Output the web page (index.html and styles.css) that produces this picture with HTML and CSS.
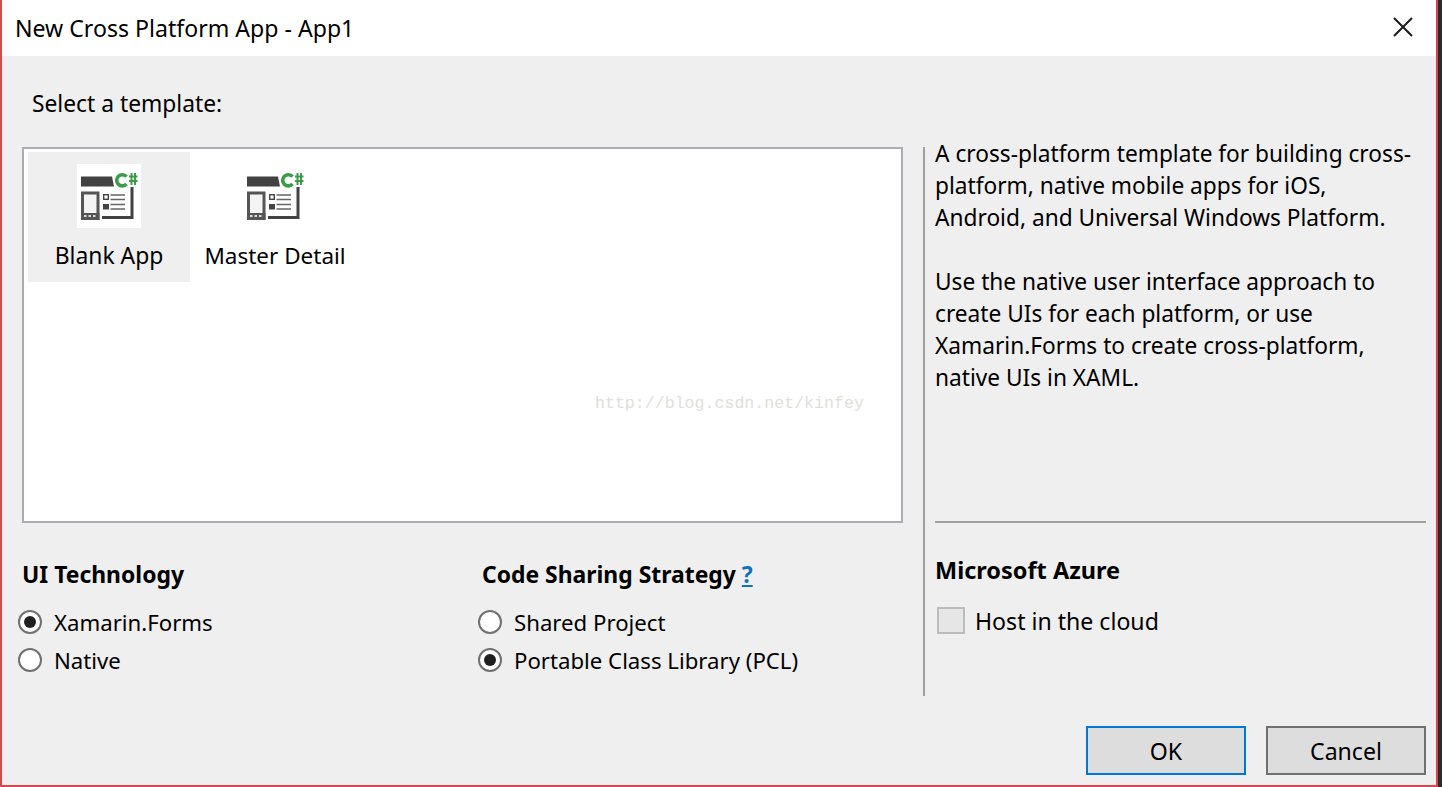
FILE: index.html
```html
<!DOCTYPE html>
<html lang="en">
<head>
<meta charset="utf-8">
<title>New Cross Platform App - App1</title>
<link rel="stylesheet" href="styles.css">
</head>
<body>
<div class="dialog">
  <header class="titlebar">
    <span class="title">New Cross Platform App - App1</span>
    <svg class="close" width="20" height="20" viewBox="0 0 20 20"><path d="M1 1L19 19M19 1L1 19" stroke="#1a1a1a" stroke-width="2" fill="none"/></svg>
  </header>
  <main class="content">
    <div class="prompt">Select a template:</div>
    <div class="columns">
      <section class="left">
        <div class="listbox">
          <div class="tile selected">
            <svg class="tile-icon" viewBox="0 0 64 64" width="64" height="64"><rect width="64" height="64" fill="#fff"/><path d="M4 12.5H35L37 22.5H4Z" fill="#424242"/><path d="M49.5 12.6A5.6 5.6 0 1 0 49.5 20" fill="none" stroke="#3c9c48" stroke-width="3.6"/><path d="M54.5 9v12M58 9v12M52 12.5h8.5M52 17h8.5" stroke="#3c9c48" stroke-width="2" fill="none"/><path d="M55 23V53.5H25" stroke="#424242" stroke-width="3" fill="none"/><rect x="5.5" y="29" width="15.5" height="25.5" fill="#f4f4f4" stroke="#555" stroke-width="3"/><path d="M4 49H22.5V56H4Z" fill="#555"/><path d="M7 52h2.5M11.5 52h2.5M16 52h2.5" stroke="#ddd" stroke-width="2"/><rect x="26.7" y="30.7" width="4.6" height="4.6" fill="#fff" stroke="#444" stroke-width="1.4"/><rect x="26" y="40" width="6" height="5.5" fill="#444"/><path d="M33.5 31h14.5M33.5 35.5h14.5M33.5 40.5h14.5M33.5 45h14.5" stroke="#666" stroke-width="1.5"/></svg>
            <span class="tile-label">Blank App</span>
          </div>
          <div class="tile wide">
            <svg class="tile-icon" viewBox="0 0 64 64" width="64" height="64"><path d="M4 12.5H35L37 22.5H4Z" fill="#424242"/><path d="M49.5 12.6A5.6 5.6 0 1 0 49.5 20" fill="none" stroke="#3c9c48" stroke-width="3.6"/><path d="M54.5 9v12M58 9v12M52 12.5h8.5M52 17h8.5" stroke="#3c9c48" stroke-width="2" fill="none"/><path d="M55 23V53.5H25" stroke="#424242" stroke-width="3" fill="none"/><rect x="5.5" y="29" width="15.5" height="25.5" fill="#f4f4f4" stroke="#555" stroke-width="3"/><path d="M4 49H22.5V56H4Z" fill="#555"/><path d="M7 52h2.5M11.5 52h2.5M16 52h2.5" stroke="#ddd" stroke-width="2"/><rect x="26.7" y="30.7" width="4.6" height="4.6" fill="#fff" stroke="#444" stroke-width="1.4"/><rect x="26" y="40" width="6" height="5.5" fill="#444"/><path d="M33.5 31h14.5M33.5 35.5h14.5M33.5 40.5h14.5M33.5 45h14.5" stroke="#666" stroke-width="1.5"/></svg>
            <span class="tile-label tight">Master Detail</span>
          </div>
          <span class="watermark">http://blog.csdn.net/kinfey</span>
        </div>
        <div class="options">
          <div class="group">
            <h3 class="heading">UI Technology</h3>
            <label class="radio"><span class="dot on"></span>Xamarin.Forms</label>
            <label class="radio"><span class="dot"></span>Native</label>
          </div>
          <div class="group">
            <h3 class="heading">Code Sharing Strategy <a class="help">?</a></h3>
            <label class="radio"><span class="dot"></span>Shared Project</label>
            <label class="radio"><span class="dot on"></span>Portable Class Library (PCL)</label>
          </div>
        </div>
      </section>
      <aside class="right">
        <div class="desc">
          <p>A cross-platform template for building cross-platform, native mobile apps for iOS, Android, and Universal Windows Platform.</p>
          <p>Use the native user interface approach to create UIs for each platform, or use Xamarin.Forms to create cross-platform, native UIs in XAML.</p>
        </div>
        <div class="azure">
          <h3 class="heading">Microsoft Azure</h3>
          <label class="check"><span class="box"></span>Host in the cloud</label>
        </div>
      </aside>
    </div>
    <footer class="buttons">
      <button class="btn default">OK</button>
      <button class="btn">Cancel</button>
    </footer>
  </main>
</div>
</body>
</html>
```

FILE: styles.css
```css
* { box-sizing: border-box; }
html, body { margin: 0; padding: 0; height: 100%; overflow: hidden; }
body { font-family: "Noto Sans", "Open Sans", sans-serif; font-size: 23.1px; color: #000; background: #2b2b2b; }
.dialog { width: 1438px; height: 787px; background: #efefef; border-left: 2px solid #d6474f; border-right: 2px solid #d6474f; border-bottom: 2px solid #d6474f; display: flex; flex-direction: column; }
.titlebar { height: 56px; background: #fff; display: flex; align-items: center; justify-content: space-between; padding: 0 23px 0 13px; flex: none; }
.title { line-height: 56px; }
.close { margin-bottom: 2px; }
.content { flex: 1; display: flex; flex-direction: column; padding: 0 10px 0 20px; min-height: 0; }
.prompt { padding: 32px 0 0 10px; height: 91px; line-height: 32px; flex: none; font-size: 22.8px; }
.columns { display: flex; height: 549px; flex: none; }
.left { width: 881px; flex: none; display: flex; flex-direction: column; }
.listbox { position: relative; height: 376px; background: #fff; border: 2px solid #abadb3; display: flex; padding: 3px 4px; flex: none; }
.tile { width: 162px; height: 130px; display: flex; flex-direction: column; align-items: center; padding-top: 12px; }
.tile.wide { width: 170px; }
.tile.selected { background: #efefef; }
.tile-label { line-height: 32px; margin-top: 12px; white-space: nowrap; font-size: 22.9px; }
.tile-label.tight { font-size: 22.5px; }
.watermark { position: absolute; left: 571px; top: 245px; font-family: "Liberation Mono", monospace; font-size: 16.6px; color: #e0e0da; white-space: nowrap; }
.options { display: flex; padding-top: 36px; }
.group { width: 460px; flex: none; }
.heading { margin: 0; font-size: 22.9px; font-weight: 700; line-height: 32px; }
.help { color: #0e70c0; text-decoration: underline; }
.radio { display: flex; align-items: center; height: 38px; margin-left: -4px; white-space: nowrap; font-size: 22.2px; }
.group .heading { margin-bottom: 12px; }
.dot { width: 24px; height: 24px; border-radius: 50%; border: 2px solid #707070; background: #fff; margin-right: 12px; flex: none; display: flex; align-items: center; justify-content: center; }
.dot.on::after { content: ""; width: 12px; height: 12px; border-radius: 50%; background: #1f1f1f; }
.right { margin-left: 20px; flex: 1; border-left: 2px solid #a0a0a0; display: flex; flex-direction: column; padding-left: 10px; }
.desc { height: 385px; margin-top: -9px; line-height: 32px; font-size: 22.7px; border-bottom: 2px solid #a0a0a0; }
.desc p { margin: 0 0 32px; max-width: 484px; }
.azure { padding-top: 31px; }
.azure .heading { margin-bottom: 21px; font-size: 23.5px; }
.check { display: flex; align-items: center; height: 27px; margin-left: 2px; }
.box { width: 28px; height: 27px; background: #e6e6e6; border: 2px solid #bcbcbc; margin-right: 10px; flex: none; }
.buttons { display: flex; justify-content: flex-end; gap: 20px; padding-top: 30px; }
.btn { width: 160px; height: 49px; background: #dddddd; border: 2px solid #707070; font: inherit; color: #000; padding: 0; }
.btn.default { border-color: #0078d7; }
```
